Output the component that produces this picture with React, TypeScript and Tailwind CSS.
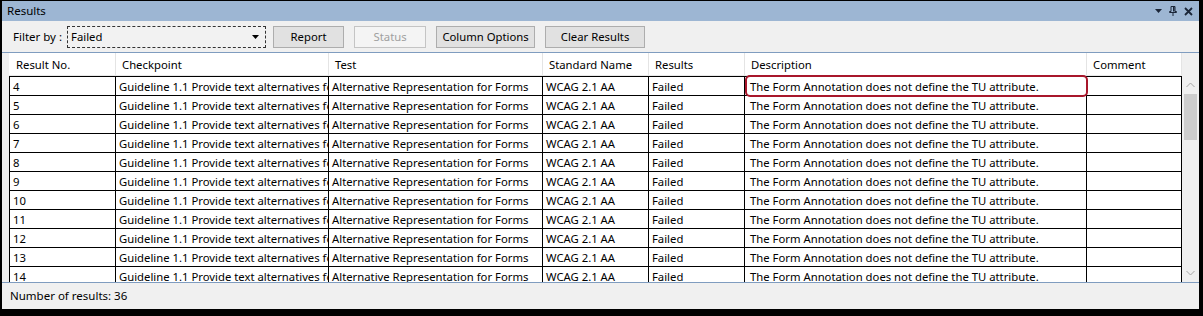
import React from "react";

const cols = [
  { name: "Result No.", w: 107 },
  { name: "Checkpoint", w: 213 },
  { name: "Test", w: 214 },
  { name: "Standard Name", w: 106 },
  { name: "Results", w: 96 },
  { name: "Description", w: 342 },
  { name: "Comment", w: 95 },
];

const rows = [4, 5, 6, 7, 8, 9, 10, 11, 12, 13, 14];

function ChevronUp() {
  return (
    <svg width="9" height="6" viewBox="0 0 9 6">
      <path d="M0.5 5 L4.5 1 L8.5 5" fill="none" stroke="#a6a6a6" strokeWidth="1" />
    </svg>
  );
}
function ChevronDown() {
  return (
    <svg width="9" height="6" viewBox="0 0 9 6">
      <path d="M0.5 1 L4.5 5 L8.5 1" fill="none" stroke="#a6a6a6" strokeWidth="1" />
    </svg>
  );
}

export default function App() {
  return (
    <div
      className="w-[1203px] h-[316px] bg-black pt-[1px] pl-[2px] pr-[4px] pb-[7px] text-black"
      style={{ fontFamily: '"Noto Sans", sans-serif' }}
    >
      <div className="flex flex-col h-full bg-[#f0f0f0] text-[11.3px] leading-none">
        {/* Title bar */}
        <div className="h-[20px] bg-[#9db6d3] flex items-center pl-[5px] pr-[6px] shrink-0">
          <span className="text-[11.5px]">Results</span>
          <div className="ml-auto flex items-center gap-[7px] text-[#1b2638]">
            <svg width="7" height="4" viewBox="0 0 7 4">
              <path d="M0 0 H7 L3.5 4 Z" fill="#1b2638" />
            </svg>
            <svg width="8" height="10" viewBox="0 0 8 10">
              <path d="M2 0.5 H6 V5.5 H7.5 V6.5 H0.5 V5.5 H2 Z M4 6.5 V10" fill="none" stroke="#1b2638" strokeWidth="1" />
              <rect x="4" y="1" width="1.5" height="4.5" fill="#1b2638" />
            </svg>
            <svg width="9" height="9" viewBox="0 0 9 9">
              <path d="M1 1 L8 8 M8 1 L1 8" stroke="#1b2638" strokeWidth="1.8" />
            </svg>
          </div>
        </div>

        {/* Toolbar */}
        <div className="h-[32px] flex items-start pt-[5px] pl-[11px] shrink-0 border-b border-[#7f9cbf]">
          <span className="text-[11.5px] mr-[5px] h-[22px] flex items-center">Filter by :</span>
          <div className="w-[199px] h-[22px] border border-dashed border-[#333] bg-[#f2f2f2] flex items-center pl-[3px] pr-[6px]">
            <span>Failed</span>
            <svg className="ml-auto" width="7" height="4" viewBox="0 0 7 4">
              <path d="M0 0 H7 L3.5 4 Z" fill="#000" />
            </svg>
          </div>
          <button className="ml-[7px] w-[71px] h-[22px] bg-[#e1e1e1] border border-[#adadad] flex items-center justify-center">
            Report
          </button>
          <button className="ml-[10px] w-[72px] h-[22px] bg-[#f4f4f4] border border-[#c4c4c4] text-[#a0a0a0] flex items-center justify-center">
            Status
          </button>
          <button className="ml-[10px] w-[99px] h-[22px] bg-[#e1e1e1] border border-[#adadad] flex items-center justify-center">
            Column Options
          </button>
          <button className="ml-[10px] w-[100px] h-[22px] bg-[#e1e1e1] border border-[#adadad] flex items-center justify-center">
            Clear Results
          </button>
        </div>

        {/* Grid */}
        <div className="h-[230px] flex pl-[7px] shrink-0 overflow-hidden border-b border-[#7f9cbf]">
          <div className="flex flex-col">
            {/* Header */}
            <div className="flex h-[23px] bg-white shrink-0 border-b border-[#e8e8e8]">
              {cols.map((c, i) => (
                <div
                  key={c.name}
                  className={`h-full flex items-center pl-[6px] pt-[1px] border-r border-[#e4e4e4] ${i === 0 ? "border-l border-l-white" : ""}`}
                  style={{ width: c.w }}
                >
                  {c.name}
                </div>
              ))}
            </div>
            {/* Rows */}
            <div className="relative flex flex-col border-t border-black border-l border-l-black">
              {rows.map((r) => (
                <div key={r} className="flex h-[19px] border-b border-black shrink-0">
                  {[
                    String(r),
                    "Guideline 1.1 Provide text alternatives for non-text content",
                    "Alternative Representation for Forms",
                    "WCAG 2.1 AA",
                    "Failed",
                    "The Form Annotation does not define the TU attribute.",
                    "",
                  ].map((t, ci) => (
                    <div
                      key={ci}
                      className={`h-full flex items-center pt-[1px] border-r border-black overflow-hidden whitespace-nowrap bg-white ${ci === 5 ? "pl-[5px]" : "pl-[3px]"}`}
                      style={{ width: cols[ci].w - (ci === 0 ? 1 : 0) }}
                    >
                      {t}
                    </div>
                  ))}
                </div>
              ))}
              <div className="absolute left-[735px] w-[343px] top-[-2px] h-[22px] border-[2.5px] border-[#a8172b] rounded-[5px]" />
            </div>
          </div>
          {/* Scrollbar */}
          <div className="w-[17px] flex flex-col items-center pt-[23px]">
            <div className="h-[18px] flex items-center justify-center">
              <ChevronUp />
            </div>
            <div className="w-[13px] h-[46px] bg-[#cdcdcd]" />
            <div className="flex-1" />
            <div className="h-[18px] flex items-center justify-center">
              <ChevronDown />
            </div>
          </div>
        </div>

        {/* Status bar */}
        <div className="flex-1 flex items-center pl-[8px] text-[11.5px]">Number of results: 36</div>
      </div>
    </div>
  );
}
